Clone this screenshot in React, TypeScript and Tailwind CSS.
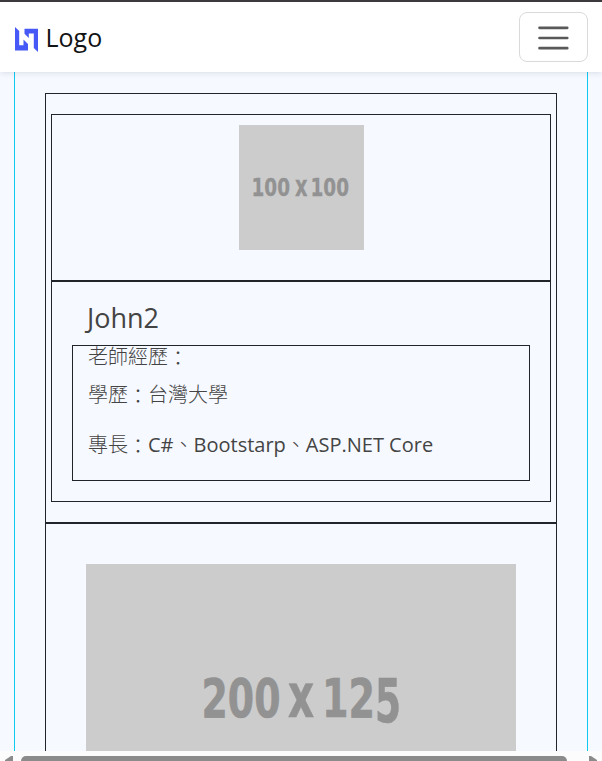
import React from "react";

function Placeholder({ children, viewBox, className }: { children: React.ReactNode; viewBox: string; className: string }) {
  return (
    <svg viewBox={viewBox} className={`block shrink-0 bg-[#cccccc] ${className}`} fill="#929292" stroke="#929292" fontFamily="'Open Sans', 'Noto Sans', sans-serif" fontWeight="700">
      {children}
    </svg>
  );
}

function Glyphs({ x, y, size, width, children }: { x: number; y: number; size: number; width: number; children: string }) {
  return (
    <text x={x} y={y} fontSize={size} textLength={width} lengthAdjust="spacingAndGlyphs" strokeWidth={size / 90} fontFamily="'DejaVu Sans Condensed', 'DejaVu Sans', sans-serif">{children}</text>
  );
}

function Colon() {
  return <span className="inline-block translate-y-[2px]">：</span>;
}

function Navbar() {
  return (
    <header className="relative z-10 flex h-[72px] shrink-0 items-center justify-between border-t-2 border-[#3c3a3c] bg-white px-[14px] shadow-[0_1px_6px_rgba(40,50,80,0.14)]">
      <a className="flex items-center gap-[7.5px] text-[#111315]">
        <svg width="24" height="25" viewBox="0 0 24 25" className="mt-1 block" fill="#4658f5">
          <path d="M1 0L5.2 4V18.200H9.500V12.500L14 17V23.500H1Z" />
          <path d="M10.500 1.800H24V25L19.800 21V6.500H14.800V11L10.500 6.800Z" />
        </svg>
        <span className="text-[25px] leading-[38px]">Logo</span>
      </a>
      <button className="flex h-[50px] w-[69px] items-center justify-center rounded-[8px] border border-[#dadadb] pr-px pt-px" aria-label="Menu">
        <svg width="38" height="38" viewBox="0 0 30 30" stroke="#595959" strokeWidth="2" strokeLinecap="round" strokeMiterlimit="10">
          <path d="M4.300 7h22M4.300 15h22M4.300 23h22" />
        </svg>
      </button>
    </header>
  );
}

function TeacherCard() {
  return (
    <section className="h-[430px] border border-[#212529] px-[5px] pt-5">
      <div className="flex h-[167px] justify-center border border-[#212529] pt-[10px]">
        <Placeholder viewBox="0 0 125 125" className="h-[125px] w-[125px]">
          <Glyphs x={12.5} y={71} size={25.5} width={38.5}>100</Glyphs>
          <Glyphs x={56} y={71} size={29} width={12.5}>x</Glyphs>
          <Glyphs x={71.5} y={71} size={25.5} width={38.5}>100</Glyphs>
        </Placeholder>
      </div>
      <div className="h-[221px] border border-[#212529] px-5 pt-[20px] text-[#444444]">
        <h2 className="h-[43px] pl-[15px] text-[27px] leading-[31px]">John2</h2>
        <div className="h-[136px] border border-[#212529] pl-[15px] text-[20px] font-light">
          <p className="h-[33px] leading-[22px]">老師經歷<Colon /></p>
          <p className="h-[51px] leading-[32px]">學歷<Colon />台灣大學</p>
          <p className="leading-[30px]">專長<Colon /><span className="font-normal">C#</span>、<span className="font-normal">Bootstarp</span>、<span className="font-normal">ASP.NET Core</span></p>
        </div>
      </div>
    </section>
  );
}

function Scrollbar() {
  return (
    <div className="flex h-[10px] shrink-0 items-end justify-between bg-[#fcfcfc] px-[5px]">
      <svg width="8" height="5" viewBox="0 0 8 5" fill="#8b8b8b"><path d="M8 0V5H0V4L6 0Z" /></svg>
      <div className="mr-[14px] h-[5px] w-[546px] rounded-t-[5px] bg-[#8b8b8b]" />
      <svg width="8" height="5" viewBox="0 0 8 5" fill="#8b8b8b"><path d="M0 0V5H8V4L2 0Z" /></svg>
    </div>
  );
}

export default function App() {
  return (
    <div lang="zh-Hant" className="flex h-[761px] w-[602px] flex-col overflow-hidden bg-[#f6f9ff] font-['Open_Sans','Noto_Sans_CJK_TC',sans-serif]">
      <Navbar />
      <main className="mx-[14px] min-h-0 flex-1 overflow-hidden border-x border-[#0dcaf0] px-[30px] pt-[21px]">
        <TeacherCard />
        <section className="h-[300px] border border-[#212529] px-10 pt-10">
          <Placeholder viewBox="0 0 430 269" className="h-[269px] w-[430px]">
            <Glyphs x={115.5} y={152.5} size={54} width={79}>200</Glyphs>
            <Glyphs x={202} y={152.5} size={60} width={26}>x</Glyphs>
            <Glyphs x={236} y={152.5} size={54} width={53}>12</Glyphs>
            <Glyphs x={289} y={157.5} size={61} width={26}>5</Glyphs>
          </Placeholder>
        </section>
      </main>
      <Scrollbar />
    </div>
  );
}
